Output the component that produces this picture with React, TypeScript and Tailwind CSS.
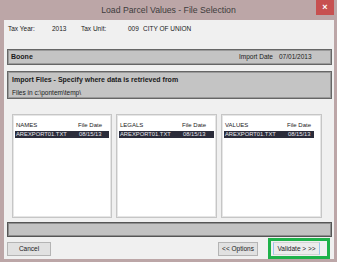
import React from "react";

const F = { fontFamily: '"Liberation Sans", Arial, sans-serif' };

function ListBox({ title, w, rowMr }: { title: string; w: string; rowMr: string }) {
  return (
    <div className={`${w} h-[104px] bg-white border border-[#c6c6c6] shadow-[inset_0_0_0_1px_#e6e6e6] flex flex-col`}>
      <div className="h-[16px] pt-[5px] pl-[3px] flex items-center text-[6px] text-[#222]">
        <span className="w-[62px]">{title}</span>
        <span>File Date</span>
      </div>
      <div className={`ml-[2px] ${rowMr} h-[7px] bg-[#2b2c3a] text-[#e8e8ee] text-[5.8px] flex items-center pl-[1px]`}>
        <span className="w-[63px]">AREXPORT01.TXT</span>
        <span>08/15/13</span>
      </div>
    </div>
  );
}

export default function App() {
  return (
    <div className="w-[337px] h-[262px] bg-[#bca6a7] flex flex-col" style={F}>
      <div className="h-[20px] relative flex items-center justify-center">
        <span className="text-[8.7px] text-[#3c3c3c] leading-none">Load Parcel Values - File Selection</span>
        <div className="absolute right-[3px] top-0 w-[18px] h-[15px] bg-[#c75050] flex items-center justify-center text-white text-[9px] font-bold leading-none">
          ×
        </div>
      </div>
      <div className="ml-[4px] mr-[3px] h-[239px] bg-[#f0f0f0] flex flex-col">
        <div className="mt-[5px] h-[8px] pl-[4px] flex items-center text-[6.5px] text-[#1a1a1a]">
          <span className="w-[44px]">Tax Year:</span>
          <span className="w-[29px]">2013</span>
          <span className="w-[47px]">Tax Unit:</span>
          <span className="w-[15px]">009</span>
          <span>CITY OF UNION</span>
        </div>
        <div className="mt-[16px] ml-[3px] mr-[2px] h-[16px] bg-[#c4c4c4] border border-[#666] shadow-[inset_0_0_0_1px_#9a9a9a] flex items-center pl-[3px] text-[#1a1a1a]">
          <span className="flex-1 text-[7px] font-bold">Boone</span>
          <span className="w-[40px] text-[6.5px]">Import Date</span>
          <span className="w-[52px] text-[6.5px]">07/01/2013</span>
        </div>
        <div className="mt-[6px] ml-[3px] mr-[2px] h-[28px] bg-[#c4c4c4] border border-[#666] shadow-[inset_0_0_0_1px_#9a9a9a] flex flex-col pl-[4px] text-[#1a1a1a]">
          <span className="mt-[4px] text-[7px] font-bold leading-[8px]">Import Files - Specify where data is retrieved from</span>
          <span className="mt-[5px] text-[6.5px] leading-[7px]">Files in c:\pontem\temp\</span>
        </div>
        <div className="mt-[15px] ml-[8px] flex gap-[4px]">
          <ListBox title="NAMES" w="w-[100px]" rowMr="mr-[2px]" />
          <ListBox title="LEGALS" w="w-[101px]" rowMr="mr-[2px]" />
          <ListBox title="VALUES" w="w-[101px]" rowMr="mr-[7px]" />
        </div>
        <div className="mt-[4px] ml-[3px] mr-[2px] h-[15px] bg-[#c2c2c2] border border-[#555] shadow-[inset_0_0_0_1px_#8e8e8e]" />
        <div className="mt-[1px] h-[21px] flex items-center pl-[3px] pr-[4px]">
          <div className="w-[44px] h-[14px] bg-[#e1e1e1] border border-[#b4b4b4] flex items-center justify-center text-[6.5px] text-[#1a1a1a]">
            Cancel
          </div>
          <div className="ml-auto w-[40px] h-[14px] bg-[#e1e1e1] border border-[#b4b4b4] flex items-center justify-center text-[6.5px] text-[#1a1a1a]">
            &lt;&lt; Options
          </div>
          <div className="ml-[10px] w-[62px] h-[21px] border-[3px] border-[#1fb24a] flex items-center pl-[2px]">
            <div className="w-[47px] h-[13px] bg-[#ececec] border border-[#9cc6ec] border-y-[#d4d4d4] flex items-center justify-center text-[6.5px] text-[#1a1a1a]">
              Validate &gt; &gt;&gt;
            </div>
          </div>
        </div>
      </div>
    </div>
  );
}
